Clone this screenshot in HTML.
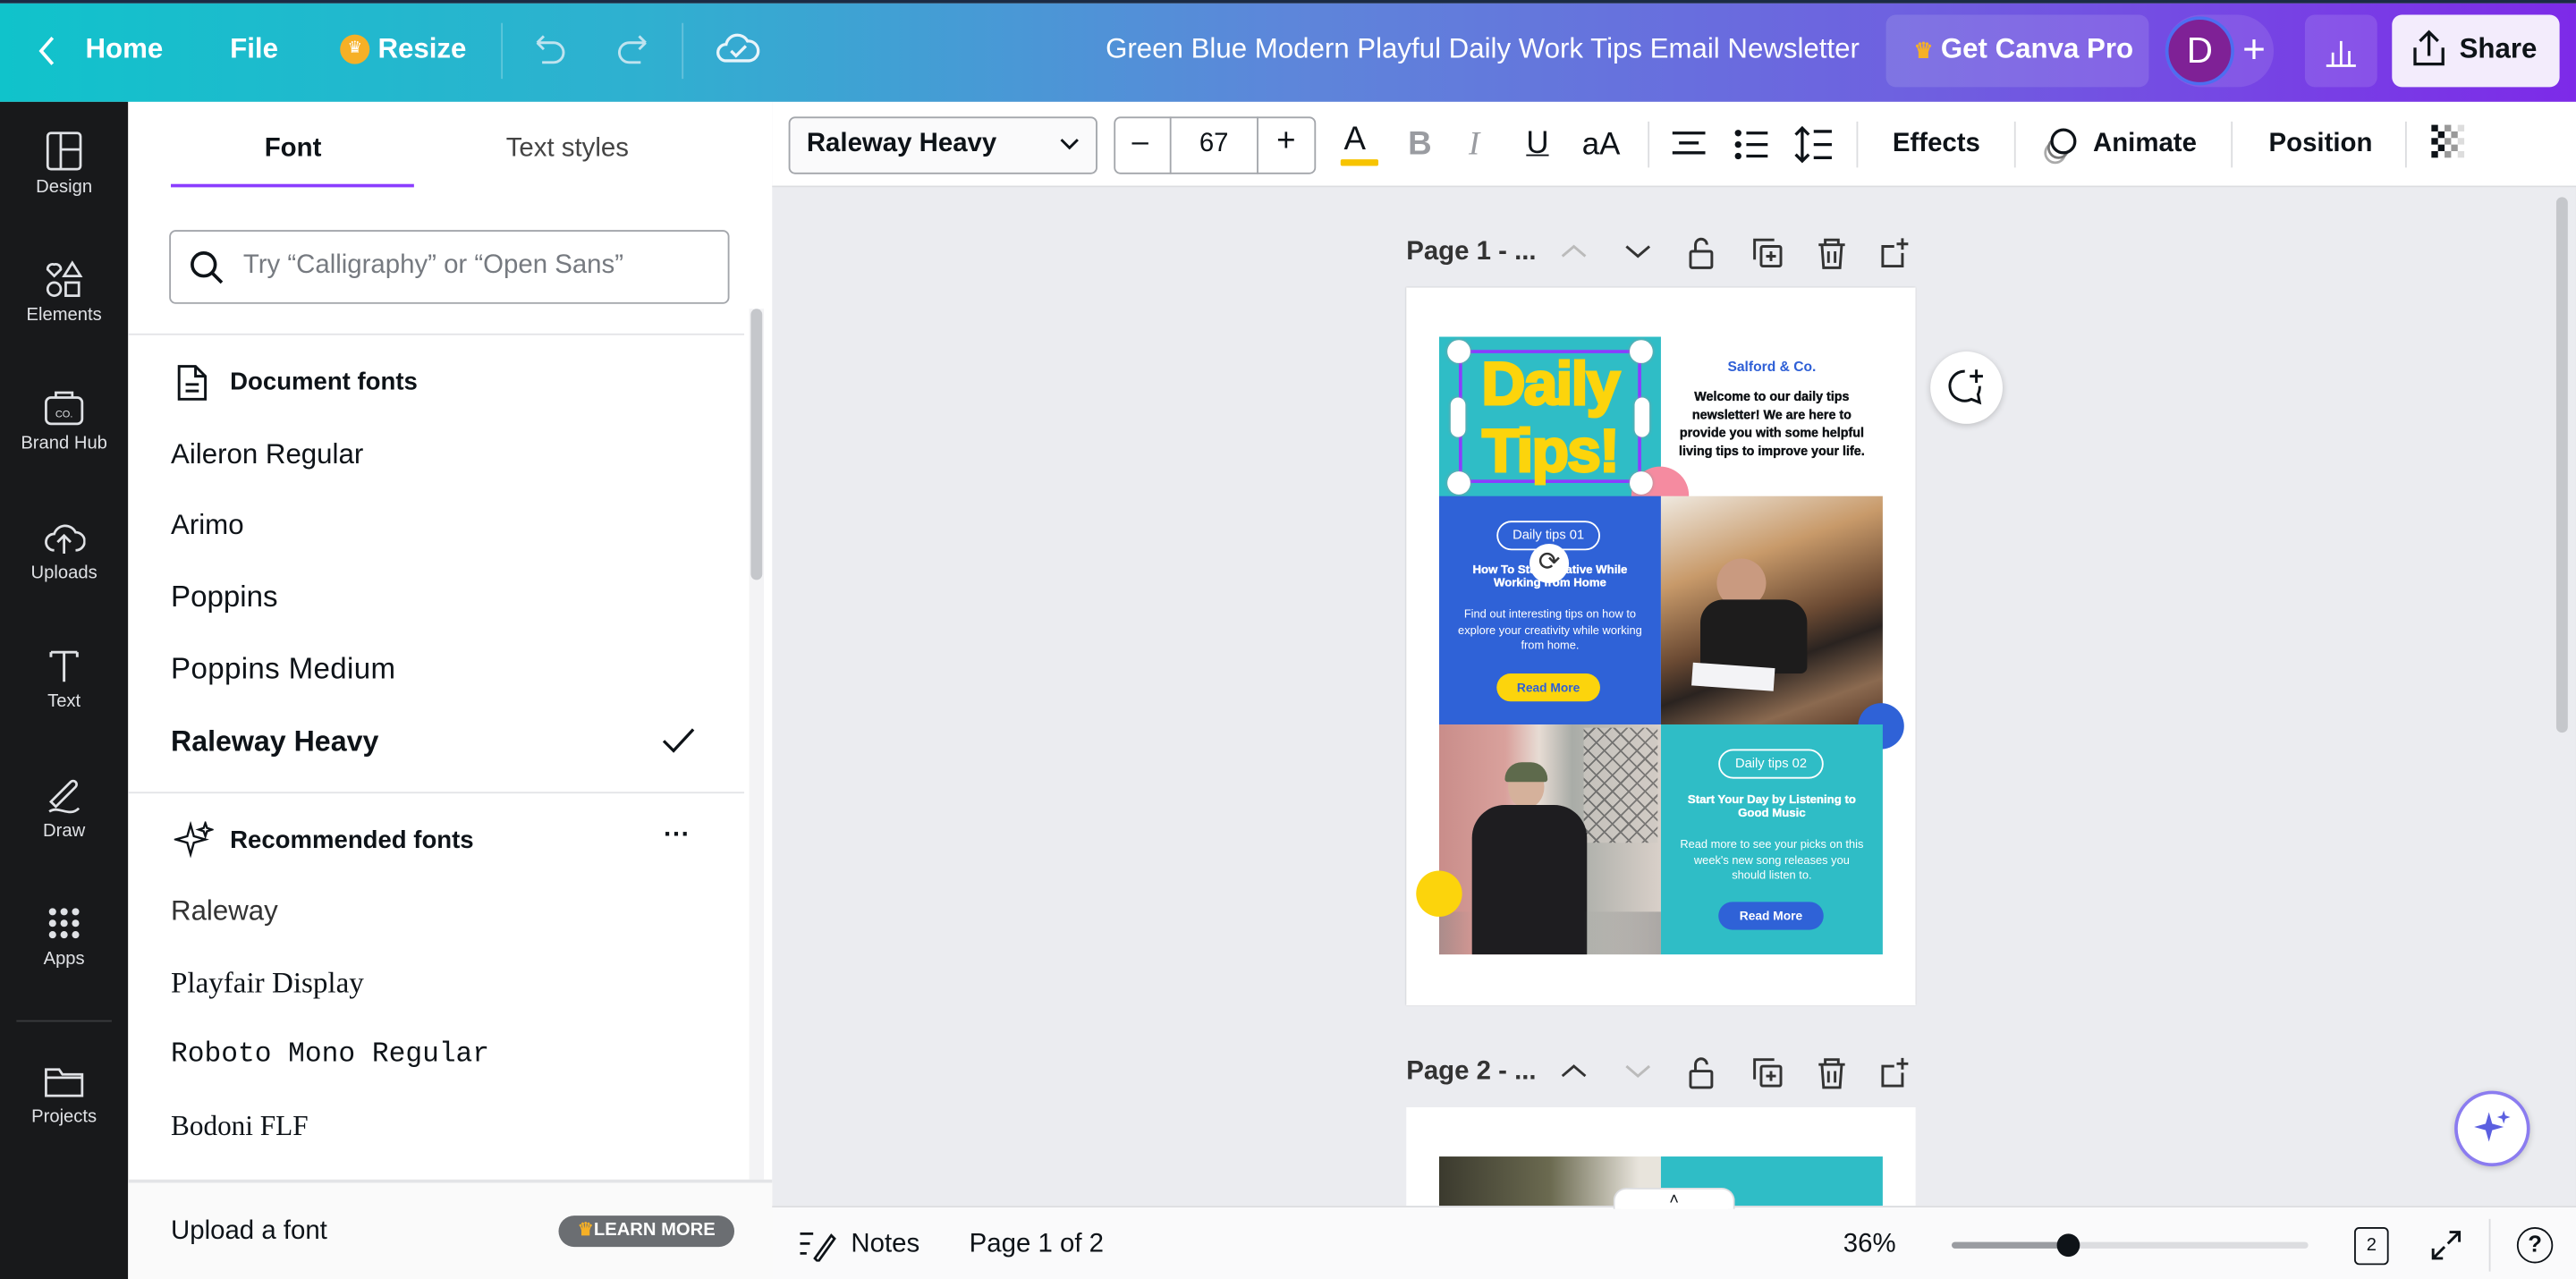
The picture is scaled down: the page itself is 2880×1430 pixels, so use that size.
<!DOCTYPE html>
<html><head><meta charset="utf-8"><style>
*{box-sizing:border-box;margin:0;padding:0}
html,body{width:2880px;height:1430px;overflow:hidden;background:#18191b}
#s{width:1568px;height:779px;transform:scale(1.83673);transform-origin:0 0;position:relative;font-family:"Liberation Sans",sans-serif;color:#0e1318;overflow:hidden;background:#ebecf0}
.a{position:absolute}
.top{left:0;top:0;width:1568px;height:62px;background:linear-gradient(90deg,#10c3cb 0%,#2fb0d0 25%,#5d86da 50%,#6f5fe0 75%,#7d2ae8 100%);border-top:2px solid #1b2b44}
.tw{color:#fff;font-size:17px;font-weight:bold;top:20px}
.side{left:0;top:62px;width:78px;height:717px;background:#18191b}
.si{width:78px;text-align:center;color:#dfe1e5;font-size:11px}
.si svg{display:block;margin:0 auto 4px}
.panel{left:78px;top:62px;width:392px;height:717px;background:#fff}
.fi{left:104px;font-size:17px;color:#0e1318}
.tb{left:470px;top:62px;width:1098px;height:52px;background:#fff;border-bottom:1px solid #dcdde0}
.btn{font-size:16px;font-weight:bold;color:#0e1318}
.sep{width:1px;height:28px;background:#dcdde0;top:74px}
.page{background:#fff}
.pg{color:#fff;text-align:center}
.pill{border:1.2px solid #fff;border-radius:10px;font-size:8px;height:18px;line-height:16px}
</style></head><body><div id="s">
<div class="a top"></div>
<svg class="a" style="left:22px;top:21px" width="14" height="20" viewBox="0 0 14 20"><path d="M10 2 L3 10 L10 18" stroke="#fff" stroke-width="2" fill="none"/></svg>
<div class="a tw" style="left:52px">Home</div>
<div class="a tw" style="left:140px">File</div>
<div class="a" style="left:207px;top:21px;width:18px;height:18px;border-radius:50%;background:#f6b026;color:#fff;font-size:10px;text-align:center;line-height:18px">♛</div>
<div class="a tw" style="left:230px">Resize</div>
<div class="a" style="left:305px;top:14px;width:1px;height:34px;background:rgba(255,255,255,.25)"></div>
<svg class="a" style="left:322px;top:20px" width="26" height="22"><path d="M5 6 H15 a6 6 0 0 1 0 12 H8 M5 6 l4 -4 M5 6 l4 4" stroke="#bfe3ef" stroke-width="1.6" fill="none"/></svg>
<svg class="a" style="left:372px;top:20px" width="26" height="22"><path d="M21 6 H11 a6 6 0 0 0 0 12 H18 M21 6 l-4 -4 M21 6 l-4 4" stroke="#bfe3ef" stroke-width="1.6" fill="none"/></svg>
<div class="a" style="left:415px;top:14px;width:1px;height:34px;background:rgba(255,255,255,.25)"></div>
<svg class="a" style="left:435px;top:17px" width="28" height="26"><path d="M7 20 a5 5 0 0 1 0-10 a7 7 0 0 1 13-2 a6 6 0 0 1 1 12 z M10 14 l3 3 l6-6" stroke="#e8f4fa" stroke-width="1.8" fill="none"/></svg>
<div class="a" style="left:673px;top:20px;color:#fff;font-size:17px">Green Blue Modern Playful Daily Work Tips Email Newsletter</div>
<div class="a" style="left:1148px;top:9px;width:160px;height:44px;border-radius:6px;background:rgba(255,255,255,.12)"></div>
<div class="a tw" style="left:1165px;top:20px"><span style="color:#f6b026;font-size:13px">♛</span> Get Canva Pro</div>
<div class="a" style="left:1318px;top:9px;width:66px;height:44px;border-radius:22px;background:rgba(255,255,255,.1)"></div>
<div class="a" style="left:1318px;top:10px;width:42px;height:42px;border-radius:50%;background:#7f2196;border:2px solid #4e6df0;color:#fff;font-size:22px;text-align:center;line-height:38px">D</div>
<div class="a" style="left:1365px;top:17px;color:#fff;font-size:24px">+</div>
<div class="a" style="left:1403px;top:9px;width:44px;height:44px;border-radius:6px;background:rgba(255,255,255,.12)"></div>
<svg class="a" style="left:1413px;top:19px" width="24" height="24"><path d="M3 21 H21 M7 21 V13 M12 21 V6 M17 21 V12" stroke="#fff" stroke-width="1.5"/></svg>
<div class="a" style="left:1456px;top:9px;width:102px;height:44px;border-radius:6px;background:#f3ecfc"></div>
<svg class="a" style="left:1467px;top:17px" width="24" height="26"><path d="M3 12 V22 H20 V12 M11.5 17 V3 M6 8 l5.5-5.5 L17 8" stroke="#0e1318" stroke-width="1.8" fill="none"/></svg>
<div class="a btn" style="left:1497px;top:20px;font-size:17px">Share</div>

<div class="a side"></div>
<div class="a si" style="left:0;top:80px"><svg width="22" height="24"><rect x="1" y="1" width="20" height="22" rx="2" stroke="#dfe1e5" stroke-width="1.5" fill="none"/><path d="M9 1 V23 M9 11 H21" stroke="#dfe1e5" stroke-width="1.5"/></svg>Design</div>
<div class="a si" style="left:0;top:158px"><svg width="24" height="24"><path d="M6 10 l-4-4 a3 3 0 0 1 4-3 a3 3 0 0 1 4 3 z" stroke="#dfe1e5" stroke-width="1.5" fill="none"/><path d="M17 2 l5 8 h-10 z" stroke="#dfe1e5" stroke-width="1.5" fill="none"/><circle cx="6" cy="18" r="4" stroke="#dfe1e5" stroke-width="1.5" fill="none"/><rect x="13" y="14" width="8" height="8" stroke="#dfe1e5" stroke-width="1.5" fill="none"/></svg>Elements</div>
<div class="a si" style="left:0;top:236px"><svg width="26" height="24"><rect x="2" y="6" width="22" height="16" rx="3" stroke="#dfe1e5" stroke-width="1.5" fill="none"/><path d="M8 6 V3 H18 V6" stroke="#dfe1e5" stroke-width="1.5" fill="none"/><text x="13" y="18" font-size="6" fill="#dfe1e5" text-anchor="middle">CO.</text></svg>Brand Hub</div>
<div class="a si" style="left:0;top:315px"><svg width="26" height="24"><path d="M7 20 a5 5 0 0 1 0-10 a7 7 0 0 1 13-1 a5.5 5.5 0 0 1 0 11 M13 22 V12 M9 15 l4-4 l4 4" stroke="#dfe1e5" stroke-width="1.5" fill="none"/></svg>Uploads</div>
<div class="a si" style="left:0;top:393px"><svg width="24" height="24"><path d="M4 4 H20 M12 4 V22 M4 4 V7 M20 4 V7" stroke="#dfe1e5" stroke-width="1.6" fill="none"/></svg>Text</div>
<div class="a si" style="left:0;top:472px"><svg width="24" height="24"><path d="M4 16 L16 4 a2 2 0 0 1 3 3 L7 19 Z M3 22 c6 -4 12 4 18 -2" stroke="#dfe1e5" stroke-width="1.5" fill="none"/></svg>Draw</div>
<div class="a si" style="left:0;top:550px"><svg width="24" height="24" fill="#dfe1e5"><circle cx="5" cy="5" r="2.2"/><circle cx="12" cy="5" r="2.2"/><circle cx="19" cy="5" r="2.2"/><circle cx="5" cy="12" r="2.2"/><circle cx="12" cy="12" r="2.2"/><circle cx="19" cy="12" r="2.2"/><circle cx="5" cy="19" r="2.2"/><circle cx="12" cy="19" r="2.2"/><circle cx="19" cy="19" r="2.2"/></svg>Apps</div>
<div class="a" style="left:10px;top:621px;width:58px;height:1px;background:#3a3b3e"></div>
<div class="a si" style="left:0;top:646px"><svg width="26" height="24"><path d="M2 5 H10 l2 3 H24 V21 H2 Z M2 10 H24" stroke="#dfe1e5" stroke-width="1.5" fill="none"/></svg>Projects</div>

<div class="a panel"></div>
<div class="a" style="left:161px;top:82px;font-size:16px;font-weight:bold">Font</div>
<div class="a" style="left:308px;top:82px;font-size:16px;color:#444">Text styles</div>
<div class="a" style="left:104px;top:112px;width:148px;height:2px;background:#8b3dff"></div>
<div class="a" style="left:103px;top:140px;width:341px;height:45px;border:1px solid #a3a6ab;border-radius:4px"></div>
<svg class="a" style="left:114px;top:151px" width="24" height="24"><circle cx="10" cy="10" r="7" stroke="#0e1318" stroke-width="2" fill="none"/><path d="M15 15 L21 21" stroke="#0e1318" stroke-width="2"/></svg>
<div class="a" style="left:148px;top:153px;font-size:16px;color:#767a80">Try “Calligraphy” or “Open Sans”</div>
<div class="a" style="left:78px;top:203px;width:375px;height:1px;background:#e3e4e7"></div>
<svg class="a" style="left:107px;top:221px" width="20" height="24"><path d="M2 2 H12 L18 8 V22 H2 Z M12 2 V8 H18 M6 13 H14 M6 17 H14" stroke="#0e1318" stroke-width="1.6" fill="none"/></svg>
<div class="a" style="left:140px;top:224px;font-size:15px;font-weight:bold">Document fonts</div>
<div class="a fi" style="top:267px">Aileron Regular</div>
<div class="a fi" style="top:310px">Arimo</div>
<div class="a fi" style="top:353px;font-size:18px">Poppins</div>
<div class="a fi" style="top:397px;font-size:18px;font-weight:500;letter-spacing:.2px">Poppins Medium</div>
<div class="a fi" style="top:441px;font-size:17.5px;font-weight:bold">Raleway Heavy</div>
<svg class="a" style="left:402px;top:441px" width="22" height="20"><path d="M2 10 L8 16 L20 3" stroke="#0e1318" stroke-width="1.8" fill="none"/></svg>
<div class="a" style="left:78px;top:482px;width:375px;height:1px;background:#e3e4e7"></div>
<svg class="a" style="left:106px;top:500px" width="24" height="24"><path d="M10 2 L12 9 L19 11 L12 13 L10 20 L8 13 L1 11 L8 9 Z M19 1 l1 3 l3 1 l-3 1 l-1 3 l-1-3 l-3-1 l3-1z" stroke="#0e1318" stroke-width="1.3" fill="none"/></svg>
<div class="a" style="left:140px;top:503px;font-size:15px;font-weight:bold">Recommended fonts</div>
<div class="a" style="left:404px;top:500px;font-size:16px;font-weight:bold">···</div>
<div class="a fi" style="top:545px;color:#333">Raleway</div>
<div class="a fi" style="top:588px;font-family:'Liberation Serif',serif;font-size:18px">Playfair Display</div>
<div class="a fi" style="top:633px;font-family:'Liberation Mono',monospace;font-size:17px">Roboto Mono Regular</div>
<div class="a fi" style="top:676px;font-family:'Liberation Serif',serif;font-size:17px">Bodoni FLF</div>
<div class="a" style="left:456px;top:188px;width:9px;height:530px;background:#f3f3f5"></div>
<div class="a" style="left:457px;top:188px;width:7px;height:165px;border-radius:4px;background:#c5c7cb"></div>
<div class="a" style="left:78px;top:718px;width:392px;height:61px;background:#fafafa;border-top:2px solid #e3e4e7"></div>
<div class="a" style="left:104px;top:741px;font-size:16px">Upload a font</div>
<div class="a" style="left:340px;top:740px;width:107px;height:19px;border-radius:10px;background:#6b6e72;color:#fff;font-size:11px;font-weight:bold;line-height:19px;text-align:center"><span style="color:#f6b026">♛</span>LEARN MORE</div>

<div class="a tb"></div>
<div class="a" style="left:480px;top:71px;width:188px;height:35px;border:1px solid #a3a6ab;border-radius:4px;background:#fafafb"></div>
<div class="a btn" style="left:491px;top:79px">Raleway Heavy</div>
<svg class="a" style="left:644px;top:82px" width="14" height="12"><path d="M2 3 L7 8 L12 3" stroke="#0e1318" stroke-width="1.6" fill="none"/></svg>
<div class="a" style="left:678px;top:71px;width:123px;height:35px;border:1px solid #a3a6ab;border-radius:4px"></div>
<div class="a" style="left:712px;top:71px;width:54px;height:35px;border-left:1px solid #a3a6ab;border-right:1px solid #a3a6ab"></div>
<div class="a" style="left:689px;top:76px;font-size:18px">–</div>
<div class="a" style="left:730px;top:79px;font-size:16px">67</div>
<div class="a" style="left:777px;top:75px;font-size:20px">+</div>
<div class="a" style="left:818px;top:74px;font-size:20px">A</div>
<div class="a" style="left:816px;top:97px;width:23px;height:4px;background:#f7c400;border-radius:1px"></div>
<div class="a" style="left:857px;top:77px;font-size:20px;font-weight:bold;color:#9a9ca1">B</div>
<div class="a" style="left:894px;top:77px;font-size:20px;font-style:italic;font-family:'Liberation Serif',serif;color:#9a9ca1">I</div>
<div class="a" style="left:929px;top:77px;font-size:19px;text-decoration:underline">U</div>
<div class="a" style="left:963px;top:78px;font-size:19px">aA</div>
<div class="a sep" style="left:1003px"></div>
<svg class="a" style="left:1017px;top:78px" width="22" height="20"><path d="M1 3 H21 M5 9 H17 M1 15 H21" stroke="#0e1318" stroke-width="1.8"/></svg>
<svg class="a" style="left:1055px;top:77px" width="22" height="22" fill="#0e1318"><circle cx="3" cy="4" r="2"/><circle cx="3" cy="11" r="2"/><circle cx="3" cy="18" r="2"/><path d="M8 4 H21 M8 11 H21 M8 18 H21" stroke="#0e1318" stroke-width="1.8"/></svg>
<svg class="a" style="left:1092px;top:76px" width="24" height="24"><path d="M5 2 V22 M1 6 l4-4 l4 4 M1 18 l4 4 l4-4 M12 4 H23 M12 12 H23 M12 20 H23" stroke="#0e1318" stroke-width="1.8" fill="none"/></svg>
<div class="a sep" style="left:1130px"></div>
<div class="a btn" style="left:1152px;top:79px">Effects</div>
<div class="a sep" style="left:1226px"></div>
<svg class="a" style="left:1242px;top:76px" width="26" height="26"><circle cx="9" cy="17" r="6" stroke="#aaa" stroke-width="1.5" fill="none"/><circle cx="11" cy="14" r="6" stroke="#777" stroke-width="1.5" fill="#fff"/><circle cx="14" cy="10" r="7" stroke="#0e1318" stroke-width="1.8" fill="#fff"/></svg>
<div class="a btn" style="left:1274px;top:79px">Animate</div>
<div class="a sep" style="left:1358px"></div>
<div class="a btn" style="left:1381px;top:79px">Position</div>
<div class="a sep" style="left:1464px"></div>
<svg class="a" style="left:1479px;top:75px" width="24" height="26"><g fill="#0e1318"><rect x="1" y="1" width="4" height="4"/><rect x="1" y="9" width="4" height="4"/><rect x="1" y="17" width="4" height="4"/><rect x="5" y="5" width="4" height="4"/><rect x="5" y="13" width="4" height="4"/></g><g fill="#999"><rect x="9" y="1" width="4" height="4"/><rect x="9" y="9" width="4" height="4"/><rect x="9" y="17" width="4" height="4"/><rect x="13" y="5" width="4" height="4"/><rect x="13" y="13" width="4" height="4"/></g><g fill="#ddd"><rect x="17" y="1" width="4" height="4"/><rect x="17" y="9" width="4" height="4"/><rect x="17" y="17" width="4" height="4"/></g></svg>

<div class="a" style="left:1553px;top:118px;width:12px;height:600px;background:#ebecf0"></div>
<div class="a" style="left:1556px;top:120px;width:7px;height:326px;border-radius:4px;background:#c5c7cb"></div>

<div class="a" style="left:856px;top:145px;font-size:16px;font-weight:bold;color:#333">Page 1 - ...</div>
<svg class="a" style="left:948px;top:144px" width="230" height="22" fill="none" stroke-width="1.6">
<path d="M3 12 l7-6 l7 6" stroke="#bbb"/>
<path d="M42 6 l7 6 l7-6" stroke="#333"/>
<g stroke="#333"><rect x="81" y="9" width="13" height="10" rx="1"/><path d="M84 9 V5 a3.5 3.5 0 0 1 7 0"/></g>
<g stroke="#333"><rect x="124" y="6" width="12" height="12" rx="1"/><path d="M120 14 V2 H132"/><path d="M130 9 V15 M127 12 H133"/></g>
<g stroke="#333"><path d="M159 5 H175 M163 5 V2 H171 V5 M161 5 L162 19 H172 L173 5 M165 9 V16 M169 9 V16"/></g>
<g stroke="#333"><path d="M210 10 V18 H198 V6 H205 M210 1 V8 M206.5 4.5 H213.5"/></g>
</svg>

<div class="a page" style="left:856px;top:175px;width:310px;height:437px;box-shadow:0 0 1px rgba(0,0,0,.2)"></div>
<div class="a" style="left:876px;top:205px;width:135px;height:98px;background:#2fbdc6"></div>
<div class="a" style="left:888px;top:213px;width:111px;height:81px;border:2px solid #8b3dff"></div>
<div class="a" style="left:876px;top:213px;width:135px;text-align:center;color:#fcd40c;font-size:37px;font-weight:900;line-height:41px;letter-spacing:-1px;-webkit-text-stroke:1.6px #fcd40c">Daily<br>Tips!</div>
<div class="a" style="left:881px;top:207px;width:14px;height:14px;border-radius:50%;background:#fff;box-shadow:0 0 2px #999"></div>
<div class="a" style="left:992px;top:207px;width:14px;height:14px;border-radius:50%;background:#fff;box-shadow:0 0 2px #999"></div>
<div class="a" style="left:881px;top:287px;width:14px;height:14px;border-radius:50%;background:#fff;box-shadow:0 0 2px #999"></div>
<div class="a" style="left:883px;top:242px;width:9px;height:24px;border-radius:5px;background:#fff;box-shadow:0 0 2px #999"></div>
<div class="a" style="left:995px;top:242px;width:9px;height:24px;border-radius:5px;background:#fff;box-shadow:0 0 2px #999"></div>
<div class="a" style="left:993px;top:284px;width:35px;height:35px;border-radius:50%;background:#f58ba0"></div>
<div class="a" style="left:992px;top:287px;width:14px;height:14px;border-radius:50%;background:#fff;box-shadow:0 0 2px #999"></div>
<div class="a" style="left:1011px;top:218px;width:135px;text-align:center;color:#2e5fd6;font-size:8.5px;font-weight:bold">Salford &amp; Co.</div>
<div class="a" style="left:1015px;top:236px;width:127px;text-align:center;font-size:7.8px;font-weight:bold;line-height:11px;-webkit-text-stroke:.2px #000">Welcome to our daily tips newsletter! We are here to provide you with some helpful living tips to improve your life.</div>
<div class="a" style="left:876px;top:302px;width:135px;height:139px;background:#2f62d7"></div>
<div class="a pg pill" style="left:911px;top:317px;width:63px">Daily tips 01</div>
<div class="a pg" style="left:884px;top:343px;width:119px;font-size:7.2px;font-weight:bold;line-height:8px;-webkit-text-stroke:.2px #fff">How To Stay Creative While Working from Home</div>
<div class="a" style="left:931px;top:331px;width:24px;height:24px;border-radius:50%;background:#fff;text-align:center;font-size:16px;line-height:24px;color:#333">⟳</div>
<div class="a pg" style="left:884px;top:370px;width:119px;font-size:7px;line-height:9.5px">Find out interesting tips on how to explore your creativity while working from home.</div>
<div class="a" style="left:911px;top:410px;width:63px;height:17px;border-radius:9px;background:#fcd40c;color:#2e5fd6;font-size:7.5px;font-weight:bold;text-align:center;line-height:17px">Read More</div>
<div class="a" style="left:1011px;top:302px;width:135px;height:139px;background:linear-gradient(160deg,#efe9e0 0%,#c89a6a 30%,#6b4a33 55%,#2a2320 68%,#8b6a50 85%,#5a3a28 100%)"></div>
<div class="a" style="left:1045px;top:340px;width:30px;height:30px;border-radius:50%;background:#c99a80"></div>
<div class="a" style="left:1035px;top:365px;width:65px;height:45px;border-radius:14px 14px 4px 4px;background:#1d1c1c"></div>
<div class="a" style="left:1030px;top:405px;width:50px;height:14px;background:#f3f3f6;transform:rotate(4deg)"></div>
<div class="a" style="left:1131px;top:428px;width:28px;height:28px;border-radius:50%;background:#2f62d7"></div>
<div class="a" style="left:876px;top:441px;width:135px;height:140px;background:linear-gradient(90deg,#c98d8a 0%,#d9a19c 30%,#e7dcd4 45%,#a9aca7 60%,#d9d0c9 100%)"></div>
<div class="a" style="left:964px;top:443px;width:45px;height:70px;background:repeating-linear-gradient(45deg,transparent 0 6px,#555 6px 7px),repeating-linear-gradient(-45deg,#cfcac4 0 6px,#555 6px 7px);opacity:.7"></div>
<div class="a" style="left:918px;top:466px;width:22px;height:26px;border-radius:50%;background:#d5b19b"></div>
<div class="a" style="left:916px;top:464px;width:26px;height:12px;border-radius:12px 12px 2px 2px;background:#5e6a4c"></div>
<div class="a" style="left:896px;top:490px;width:70px;height:91px;border-radius:20px 20px 0 0;background:#1e1d20"></div>
<div class="a" style="left:876px;top:555px;width:135px;height:26px;background:linear-gradient(90deg,rgba(140,140,140,.5),transparent 15%,transparent 65%,rgba(140,140,140,.6))"></div>
<div class="a" style="left:862px;top:530px;width:28px;height:28px;border-radius:50%;background:#fcd40c"></div>
<div class="a" style="left:1011px;top:441px;width:135px;height:140px;background:#2fbdc6"></div>
<div class="a pg pill" style="left:1046px;top:456px;width:64px">Daily tips 02</div>
<div class="a pg" style="left:1022px;top:483px;width:113px;font-size:7.2px;font-weight:bold;line-height:8px;-webkit-text-stroke:.2px #fff">Start Your Day by Listening to Good Music</div>
<div class="a pg" style="left:1020px;top:510px;width:117px;font-size:7px;line-height:9.5px">Read more to see your picks on this week's new song releases you should listen to.</div>
<div class="a" style="left:1046px;top:549px;width:64px;height:17px;border-radius:9px;background:#2f62d7;color:#fff;font-size:7.5px;font-weight:bold;text-align:center;line-height:17px">Read More</div>

<div class="a" style="left:1175px;top:214px;width:44px;height:44px;border-radius:50%;background:#fff;box-shadow:0 1px 4px rgba(0,0,0,.2)"></div>
<svg class="a" style="left:1184px;top:223px" width="26" height="26"><path d="M12 3 a9 9 0 1 0 4 17 l5 2 l-1-5 a9 9 0 0 0 1-5" stroke="#0e1318" stroke-width="1.6" fill="none"/><path d="M19 2 V10 M15 6 H23" stroke="#0e1318" stroke-width="1.6"/></svg>

<div class="a" style="left:856px;top:644px;font-size:16px;font-weight:bold;color:#333">Page 2 - ...</div>
<svg class="a" style="left:948px;top:643px" width="230" height="22" fill="none" stroke-width="1.6">
<path d="M3 12 l7-6 l7 6" stroke="#333"/>
<path d="M42 6 l7 6 l7-6" stroke="#bbb"/>
<g stroke="#333"><rect x="81" y="9" width="13" height="10" rx="1"/><path d="M84 9 V5 a3.5 3.5 0 0 1 7 0"/></g>
<g stroke="#333"><rect x="124" y="6" width="12" height="12" rx="1"/><path d="M120 14 V2 H132"/><path d="M130 9 V15 M127 12 H133"/></g>
<g stroke="#333"><path d="M159 5 H175 M163 5 V2 H171 V5 M161 5 L162 19 H172 L173 5 M165 9 V16 M169 9 V16"/></g>
<g stroke="#333"><path d="M210 10 V18 H198 V6 H205 M210 1 V8 M206.5 4.5 H213.5"/></g>
</svg>
<div class="a page" style="left:856px;top:674px;width:310px;height:60px"></div>
<div class="a" style="left:876px;top:704px;width:135px;height:30px;background:linear-gradient(90deg,#3b3a2e,#6b6a50 50%,#e8e4dc 90%)"></div>
<div class="a" style="left:1011px;top:704px;width:135px;height:30px;background:#2fbdc6"></div>

<div class="a" style="left:1494px;top:664px;width:46px;height:46px;border-radius:50%;background:#fff;border:2px solid #8b7cf0;box-shadow:0 1px 4px rgba(0,0,0,.2)"></div>
<svg class="a" style="left:1504px;top:674px" width="26" height="26"><path d="M11 3 L13 10 L20 12 L13 14 L11 21 L9 14 L2 12 L9 10 Z M20 2 l1 3 l3 1 l-3 1 l-1 3 l-1-3 l-3-1 l3-1z" fill="#5b5fe0"/></svg>

<div class="a" style="left:470px;top:734px;width:1098px;height:45px;background:#fafafb;border-top:1px solid #dcdde0"></div>
<div class="a" style="left:982px;top:723px;width:74px;height:13px;background:#fff;border-radius:8px 8px 0 0;border:1px solid #dcdde0;border-bottom:none;text-align:center;font-size:10px;line-height:13px">˄</div>
<svg class="a" style="left:486px;top:748px" width="24" height="20"><path d="M1 3 H9 M1 9 H7 M1 15 H5 M10 18 L20 4 l2 2 L12 20 Z" stroke="#0e1318" stroke-width="1.5" fill="none"/></svg>
<div class="a" style="left:518px;top:749px;font-size:16px">Notes</div>
<div class="a" style="left:590px;top:749px;font-size:16px">Page 1 of 2</div>
<div class="a" style="left:1122px;top:749px;font-size:16px">36%</div>
<div class="a" style="left:1188px;top:756px;width:217px;height:4px;border-radius:2px;background:#dcdde0"></div>
<div class="a" style="left:1188px;top:756px;width:72px;height:4px;border-radius:2px;background:#9a9ca1"></div>
<div class="a" style="left:1252px;top:751px;width:14px;height:14px;border-radius:50%;background:#0e1318"></div>
<div class="a" style="left:1433px;top:747px;width:21px;height:23px;border:1.6px solid #0e1318;border-radius:3px;font-size:11px;text-align:center;line-height:20px">2</div>
<svg class="a" style="left:1478px;top:747px" width="22" height="22"><path d="M13 3 H19 V9 M19 3 L12 10 M9 19 H3 V13 M3 19 L10 12" stroke="#0e1318" stroke-width="1.6" fill="none"/></svg>
<div class="a" style="left:1515px;top:742px;width:1px;height:32px;background:#dcdde0"></div>
<div class="a" style="left:1532px;top:747px;width:22px;height:22px;border:1.6px solid #0e1318;border-radius:50%;font-size:14px;text-align:center;line-height:19px;font-weight:bold">?</div>
</div></body></html>
